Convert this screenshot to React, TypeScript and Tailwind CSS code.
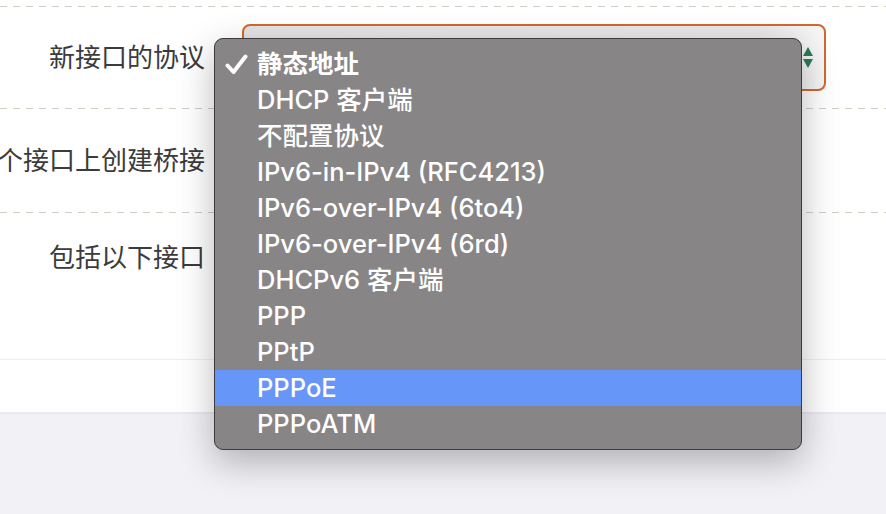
import React from "react";

const options = [
  "静态地址",
  "DHCP 客户端",
  "不配置协议",
  "IPv6-in-IPv4 (RFC4213)",
  "IPv6-over-IPv4 (6to4)",
  "IPv6-over-IPv4 (6rd)",
  "DHCPv6 客户端",
  "PPP",
  "PPtP",
  "PPPoE",
  "PPPoATM",
];

const Dashed = () => (
  <div className="h-px w-full bg-[linear-gradient(to_right,#d3ccc3_55%,transparent_55%)] bg-[length:13px_1px]" />
);

const Label = ({ children }: { children: React.ReactNode }) => (
  <div className="w-[205px] shrink-0 whitespace-nowrap text-right text-[26px] leading-9 text-[#3b3b3b] flex justify-end">
    {children}
  </div>
);

export default function App() {
  return (
    <div
      className="relative w-[886px] h-[514px] overflow-hidden bg-[#f2f1f6]"
      style={{ fontFamily: '"Inter", "Noto Sans CJK SC", sans-serif' }}
    >
      <div className="bg-white">
        <div className="h-[6px]" />
        <Dashed />
        {/* protocol row */}
        <div className="flex items-center h-[101px]">
          <Label>新接口的协议</Label>
          <div className="ml-[37px] relative w-[584px] h-[67px] rounded-[8px] border-2 border-[#d3682f] bg-[linear-gradient(to_right,#e4e3e5_0%,#e9e8ea_88%,#f6f6f7_100%)]">
            <svg
              className="absolute right-[11px] top-[21px]"
              width="10"
              height="21"
              viewBox="0 0 10 21"
            >
              <path d="M5 0 L10 9 L0 9 Z" fill="#2f7a5b" />
              <path d="M0 12 L10 12 L5 21 Z" fill="#2f7a5b" />
            </svg>
          </div>
        </div>
        <Dashed />
        {/* bridge row, label runs past the left edge */}
        <div className="flex items-center h-[103px] overflow-hidden">
          <div className="w-[205px] shrink-0 overflow-hidden flex justify-end">
            <span className="whitespace-nowrap text-[26px] leading-9 text-[#3b3b3b]">
              在多个接口上创建桥接
            </span>
          </div>
        </div>
        <Dashed />
        {/* interfaces row */}
        <div className="flex items-start h-[146px] pt-[27px]">
          <Label>包括以下接口</Label>
        </div>
        <div className="h-px bg-[#efedf1]" />
        <div className="h-[52px]" />
        <div className="h-[2px] bg-[#ebe9ee]" />
      </div>

      {/* open select menu */}
      <div className="absolute left-[214px] top-[38px] w-[588px] h-[412px] rounded-[9px] border border-[#3d3c3d] bg-[#878586] shadow-[0_12px_36px_rgba(0,0,0,0.28)] pt-[7px] overflow-hidden">
        {options.map((o, i) => (
          <div
            key={o}
            className={`relative h-[36px] flex items-center pl-[42px] text-[25.5px] font-medium text-white whitespace-nowrap ${
              i === 9 ? "bg-[#6596f8]" : ""
            }`}
          >
            {i === 0 && (
              <svg
                className="absolute left-[10px] top-[8px]"
                width="23"
                height="21"
                viewBox="0 0 23 21"
              >
                <path
                  d="M2.5 11.5 L8.5 18 L20.5 2.5"
                  fill="none"
                  stroke="#fff"
                  strokeWidth="4"
                  strokeLinecap="round"
                  strokeLinejoin="round"
                />
              </svg>
            )}
            <span className={i === 0 ? "font-bold" : ""}>{o}</span>
          </div>
        ))}
      </div>
    </div>
  );
}
